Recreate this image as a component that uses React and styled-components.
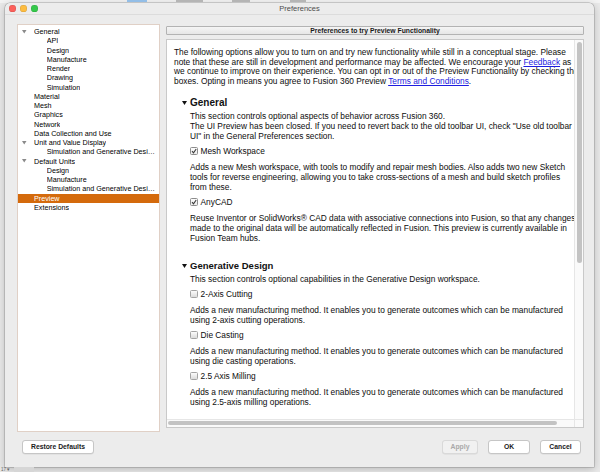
import React from 'react'
import styled, { createGlobalStyle } from 'styled-components'

const GlobalStyle = createGlobalStyle`
  html, body { margin: 0; padding: 0; }
  body {
    width: 600px;
    height: 472px;
    overflow: hidden;
    background: #e9e9e9;
    font-family: "Liberation Sans", Arial, sans-serif;
  }
`

const Screen = styled.div`
  width: 600px;
  height: 472px;
  display: flex;
  flex-direction: column;
  overflow: hidden;
  background: #e9e9e9;
`

// the app behind the dialog: only the bottoms of its tab captions show
const BackdropBar = styled.div`
  height: 3px;
  flex: 0 0 3px;
  overflow: hidden;
  display: flex;
  align-items: flex-start;
  padding-left: 127px;
  background: #f3f3f3;
`

const BackdropTab = styled.span`
  flex: 0 0 ${p => p.$w}px;
  display: flex;
`

const TabStub = styled.span`
  width: ${p => p.$w}px;
  height: 1.5px;
  background: ${p => (p.$active ? '#7db3e6' : '#a8a8a8')};
  opacity: 0.8;
`

const BackdropFoot = styled.div`
  flex: 1;
  display: flex;
  align-items: flex-start;
  gap: 4px;
  padding-left: 1px;
  font-size: 4.5px;
  line-height: 5px;
  color: #666;
  overflow: hidden;
`

const FootChip = styled.span`
  width: 20px;
  height: 5px;
  background: #d6d6d6;
`

const Window = styled.div`
  margin: 0 6px 0 5px;
  height: 464px;
  flex: 0 0 464px;
  display: flex;
  flex-direction: column;
  background: #ececec;
  border-radius: 5px 5px 0 0;
  box-shadow: 0 0 0 0.5px rgba(0, 0, 0, 0.28), 0 2px 8px rgba(0, 0, 0, 0.22);
`

const TitleBar = styled.div`
  height: 10px;
  display: grid;
  grid-template-columns: 1fr auto 1fr;
  align-items: center;
  border-bottom: 1px solid #dcdcdc;
  padding-top: 0.5px;
`

const Lights = styled.div`
  display: flex;
  gap: 4.3px;
  padding-left: 4.3px;
`

const Light = styled.span`
  width: 6.7px;
  height: 6.7px;
  border-radius: 50%;
  background: ${p => p.$color};
  box-shadow: inset 0 0 0 0.5px rgba(0, 0, 0, 0.15);
`

const Title = styled.div`
  font-size: 7.5px;
  color: #4c4c4c;
`

const Main = styled.div`
  display: flex;
  gap: 6px;
  padding: 9px 10px 0 12px;
`

const Tree = styled.ul`
  list-style: none;
  margin: 0;
  width: 143px;
  height: 408px;
  box-sizing: border-box;
  padding: 2.6px 0 0;
  background: #fff;
  border: 1px solid #e0d0c6;
`

const TreeRow = styled.li`
  display: flex;
  align-items: center;
  height: 9.25px;
  padding-left: ${p => p.$level * 12.7}px;
  padding-right: 4px;
  font-size: 7.2px;
  color: ${p => (p.$selected ? '#fff' : '#000')};
  background: ${p => (p.$selected ? '#d46a0c' : 'transparent')};
  white-space: nowrap;
  overflow: hidden;
`

const TreeToggle = styled.span`
  flex: 0 0 16px;
  display: flex;
  align-items: center;
  padding-left: 4px;
  box-sizing: border-box;
`

const TreeLabel = styled.span`
  overflow: hidden;
  text-overflow: ellipsis;
`

const RightColumn = styled.div`
  width: 418px;
  display: flex;
  flex-direction: column;
  gap: 4px;
  padding-top: 2px;
`

const PageHeader = styled.div`
  height: 9px;
  box-sizing: border-box;
  border: 1px solid #b3b3b3;
  border-radius: 1px;
  background: linear-gradient(#f5f5f5, #e6e6e6);
  font-size: 6.8px;
  font-weight: 700;
  line-height: 7px;
  text-align: center;
  color: #1a1a1a;
  white-space: nowrap;
`

const ScrollView = styled.div`
  height: 389px;
  box-sizing: border-box;
  border: 1px solid #c9c9c9;
  background: #fff;
  display: grid;
  grid-template-columns: 1fr 9px;
  grid-template-rows: 1fr 8px;
`

const Content = styled.div`
  overflow: hidden;
  padding: 8.5px 0 0 7px;
  font-size: 8.35px;
  color: #0d0d0d;
`

const VTrack = styled.div`
  background: #fafafa;
  border-left: 1px solid #e6e6e6;
  padding: 2px 0 0 2px;
`

const VThumb = styled.div`
  width: 5px;
  height: 221px;
  border-radius: 3px;
  background: #c3c3c3;
`

const HTrack = styled.div`
  background: #fafafa;
  border-top: 1px solid #e6e6e6;
  padding: 1.5px 0 0 1px;
`

const HThumb = styled.div`
  width: 389px;
  height: 4px;
  border-radius: 3px;
  background: #c3c3c3;
`

const Corner = styled.div`
  background: #fafafa;
  border-top: 1px solid #e6e6e6;
  border-left: 1px solid #e6e6e6;
`

const Intro = styled.div`
  line-height: 9.7px;
`

const Line = styled.div`
  white-space: nowrap;
`

const Link = styled.a`
  color: #1d1de0;
  text-decoration: underline;
`

const Section = styled.section`
  margin-top: ${p => p.$top}px;
  padding-left: 8px;
`

const Heading = styled.h2`
  margin: 0;
  height: 14px;
  display: flex;
  align-items: center;
  font-size: ${p => p.$size}px;
  font-weight: 700;
  color: #111;
  white-space: nowrap;
`

const Caret = styled.span`
  flex: 0 0 8px;
  display: flex;
  align-items: center;
`

const SectionBody = styled.div`
  padding-left: 8px;
`

const Desc = styled.div`
  margin-top: ${p => p.$top}px;
  line-height: 10px;
`

const OptionRow = styled.label`
  margin-top: 3.6px;
  height: 12px;
  display: flex;
  align-items: center;
  gap: 2.5px;
  white-space: nowrap;
`

const Box = styled.span`
  width: 8px;
  height: 8px;
  box-sizing: border-box;
  border: 1px solid ${p => (p.$checked ? '#8d8d8d' : '#a4a4a4')};
  border-radius: 1.5px;
  background: ${p => (p.$checked ? 'linear-gradient(#fdfdfd, #ececec)' : 'linear-gradient(#fcfcfc, #dcdcdc)')};
  display: flex;
  align-items: center;
  justify-content: center;
`

const Footer = styled.div`
  display: flex;
  align-items: flex-start;
  gap: 10px;
  padding: 8px 13px 0 17px;
`

const Spacer = styled.div`
  flex: 1;
`

const Button = styled.button`
  width: ${p => p.$w}px;
  height: 14px;
  padding: 0;
  box-sizing: border-box;
  border: 1px solid ${p => (p.disabled ? '#d9d9d9' : '#c6c6c6')};
  border-radius: 3px;
  background: ${p => (p.disabled ? '#f1f1f1' : '#fff')};
  box-shadow: 0 0.5px 0.5px rgba(0, 0, 0, 0.08);
  font-family: inherit;
  font-size: 6.8px;
  font-weight: 700;
  color: ${p => (p.disabled ? '#a9a9a9' : '#1a1a1a')};
`

const TriDown = ({ color = '#111', w = 5, h = 4 }) => (
  <svg width={w} height={h} viewBox="0 0 5 4">
    <polygon points="0,0 5,0 2.5,4" fill={color} />
  </svg>
)

const Check = () => (
  <svg width="6" height="6" viewBox="0 0 6 6">
    <path d="M1 3.2 L2.5 4.8 L5.2 1" fill="none" stroke="#3a3a3a" strokeWidth="1.1" />
  </svg>
)

const treeItems = [
  { label: 'General', level: 0, open: true },
  { label: 'API', level: 1 },
  { label: 'Design', level: 1 },
  { label: 'Manufacture', level: 1 },
  { label: 'Render', level: 1 },
  { label: 'Drawing', level: 1 },
  { label: 'Simulation', level: 1 },
  { label: 'Material', level: 0 },
  { label: 'Mesh', level: 0 },
  { label: 'Graphics', level: 0 },
  { label: 'Network', level: 0 },
  { label: 'Data Collection and Use', level: 0 },
  { label: 'Unit and Value Display', level: 0, open: true },
  { label: 'Simulation and Generative Design', level: 1 },
  { label: 'Default Units', level: 0, open: true },
  { label: 'Design', level: 1 },
  { label: 'Manufacture', level: 1 },
  { label: 'Simulation and Generative Design', level: 1 },
  { label: 'Preview', level: 0, selected: true },
  { label: 'Extensions', level: 0 },
]

const manufacturing =
  'Adds a new manufacturing method. It enables you to generate outcomes which can be manufactured'

const Option = ({ checked, children }) => (
  <OptionRow>
    <Box $checked={checked}>{checked && <Check />}</Box>
    {children}
  </OptionRow>
)

const App = () => (
  <Screen>
    <GlobalStyle />
    <BackdropBar>
      <BackdropTab $w={49}><TabStub $w={20} $active /></BackdropTab>
      <BackdropTab $w={56}><TabStub $w={27} /></BackdropTab>
      <BackdropTab $w={58}><TabStub $w={18} /></BackdropTab>
      <BackdropTab $w={40}><TabStub $w={16} /></BackdropTab>
    </BackdropBar>
    <Window>
      <TitleBar>
        <Lights>
          <Light $color="#fc605b" />
          <Light $color="#fdbc40" />
          <Light $color="#34c84a" />
        </Lights>
        <Title>Preferences</Title>
        <div />
      </TitleBar>
      <Main>
        <Tree>
          {treeItems.map((item, i) => (
            <TreeRow key={i} $level={item.level} $selected={item.selected}>
              <TreeToggle>{item.open && <TriDown color="#8a8a8a" w={4.5} h={3.6} />}</TreeToggle>
              <TreeLabel>{item.label}</TreeLabel>
            </TreeRow>
          ))}
        </Tree>
        <RightColumn>
          <PageHeader>Preferences to try Preview Functionality</PageHeader>
          <ScrollView>
            <Content>
              <Intro>
                <Line>The following options allow you to turn on and try new functionality while still in a conceptual stage. Please</Line>
                <Line>
                  note that these are still in development and performance may be affected. We encourage your <Link>Feedback</Link> as
                </Line>
                <Line>we continue to improve on their experience. You can opt in or out of the Preview Functionality by checking the</Line>
                <Line>
                  boxes. Opting in means you agree to Fusion 360 Preview <Link>Terms and Conditions</Link>.
                </Line>
              </Intro>

              <Section $top={8.7}>
                <Heading $size={10}>
                  <Caret><TriDown w={5} h={4} /></Caret>
                  General
                </Heading>
                <SectionBody>
                  <Desc $top={1.7}>
                    <Line>This section controls optional aspects of behavior across Fusion 360.</Line>
                    <Line>The UI Preview has been closed. If you need to revert back to the old toolbar UI, check "Use old toolbar</Line>
                    <Line>UI" in the General Preferences section.</Line>
                  </Desc>
                  <Option checked>Mesh Workspace</Option>
                  <Desc $top={5.3}>
                    <Line>Adds a new Mesh workspace, with tools to modify and repair mesh bodies. Also adds two new Sketch</Line>
                    <Line>tools for reverse engineering, allowing you to take cross-sections of a mesh and build sketch profiles</Line>
                    <Line>from these.</Line>
                  </Desc>
                  <Option checked>AnyCAD</Option>
                  <Desc $top={5.3}>
                    <Line>Reuse Inventor or SolidWorks® CAD data with associative connections into Fusion, so that any changes</Line>
                    <Line>made to the original data will be automatically reflected in Fusion. This preview is currently available in</Line>
                    <Line>Fusion Team hubs.</Line>
                  </Desc>
                </SectionBody>
              </Section>

              <Section $top={15.7}>
                <Heading $size={9.5}>
                  <Caret><TriDown w={5} h={4} /></Caret>
                  Generative Design
                </Heading>
                <SectionBody>
                  <Desc $top={1.7}>
                    <Line>This section controls optional capabilities in the Generative Design workspace.</Line>
                  </Desc>
                  <Option>2-Axis Cutting</Option>
                  <Desc $top={5.3}>
                    <Line>{manufacturing}</Line>
                    <Line>using 2-axis cutting operations.</Line>
                  </Desc>
                  <Option>Die Casting</Option>
                  <Desc $top={5.3}>
                    <Line>{manufacturing}</Line>
                    <Line>using die casting operations.</Line>
                  </Desc>
                  <Option>2.5 Axis Milling</Option>
                  <Desc $top={5.3}>
                    <Line>{manufacturing}</Line>
                    <Line>using 2.5-axis milling operations.</Line>
                  </Desc>
                </SectionBody>
              </Section>
            </Content>
            <VTrack><VThumb /></VTrack>
            <HTrack><HThumb /></HTrack>
            <Corner />
          </ScrollView>
        </RightColumn>
      </Main>
      <Footer>
        <Button $w={72}>Restore Defaults</Button>
        <Spacer />
        <Button $w={36} disabled>Apply</Button>
        <Button $w={42}>OK</Button>
        <Button $w={41}>Cancel</Button>
      </Footer>
    </Window>
    <BackdropFoot>
      <span>17 ▾</span>
      <FootChip />
    </BackdropFoot>
  </Screen>
)

export default App
